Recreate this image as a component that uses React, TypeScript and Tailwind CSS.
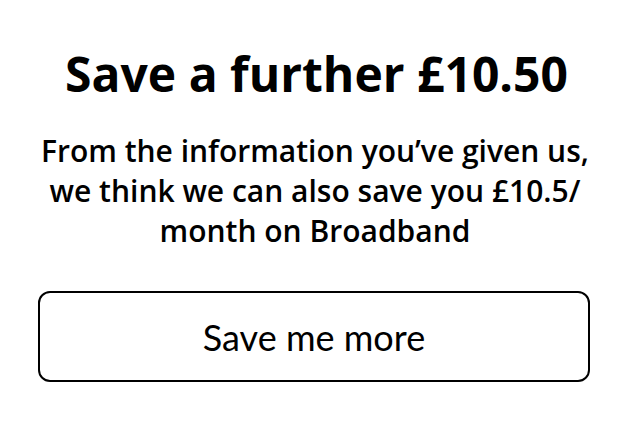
export default function App() {
  return (
    <div className="flex h-[422px] w-[628px] flex-col items-center bg-white px-[38px] pt-[44px] text-black">
      <h1 className="pl-[5px] font-['Open_Sans',sans-serif] text-[48px] font-bold leading-[60px]">
        Save a further £10.50
      </h1>
      <p className="mt-[27px] pl-[2px] text-center font-['Open_Sans',sans-serif] text-[30px] font-semibold leading-[40px]">
        From the information you’ve given us,
        <br />
        we think we can also save you £10.5/
        <br />
        month on Broadband
      </p>
      <button
        type="button"
        className="mt-[40px] flex h-[91px] w-full items-center justify-center rounded-[12px] border-2 border-black bg-white font-['Lato',sans-serif] text-[36px] text-black"
      >
        Save me more
      </button>
    </div>
  )
}
